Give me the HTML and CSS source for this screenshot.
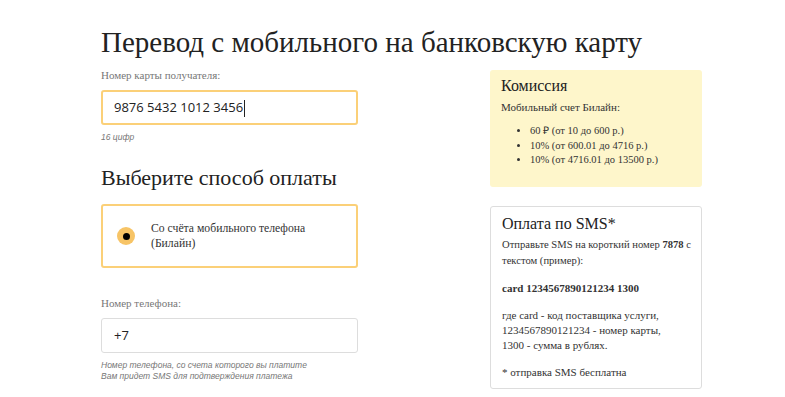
FILE: index.html
```html
<!DOCTYPE html>
<html>
    <head>
        <title>Перевод с мобильного на банковскую карту</title>
        <meta http-equiv="content-type" content="text/html; charset=UTF-8">
        <link rel="stylesheet" href="styles.css">
    </head>
    <body>
        <h1>Перевод с мобильного на банковскую карту</h1>

        <div class="columns">
            <div class="form">
                <label class="label">Номер карты получателя:</label>
                <div class="input active">9876 5432 1012 3456<span class="caret"></span></div>
                <p class="hint">16 цифр</p>

                <h2>Выберите способ оплаты</h2>
                <div class="method">
                    <span class="radio"></span>
                    <span class="method-text">Со счёта мобильного телефона<br>(Билайн)</span>
                </div>

                <label class="label phone-label">Номер телефона:</label>
                <div class="input">+7</div>
                <p class="hint">Номер телефона, со счета которого вы платите<br>Вам придет SMS для подтверждения платежа</p>
            </div>

            <div class="side">
                <div class="box fee">
                    <h3>Комиссия</h3>
                    <p>Мобильный счет Билайн:</p>
                    <ul>
                        <li>60 ₽ (от 10 до 600 р.)</li>
                        <li>10% (от 600.01 до 4716 р.)</li>
                        <li>10% (от 4716.01 до 13500 р.)</li>
                    </ul>
                </div>

                <div class="box sms">
                    <h3>Оплата по SMS*</h3>
                    <p class="intro">Отправьте SMS на короткий номер <b>7878</b> с<br>текстом (пример):</p>
                    <p><b>card 1234567890121234 1300</b></p>
                    <p>где card - код поставщика услуги,<br>1234567890121234 - номер карты,<br>1300 - сумма в рублях.</p>
                    <p>* отправка SMS бесплатна</p>
                </div>
            </div>
        </div>
    </body>
</html>
```

FILE: styles.css
```css
body { margin: 0; padding: 0 0 0 101px; font-family: 'Liberation Serif', serif; color: #333; background: #fff; }

h1 { margin: 0; padding-top: 22px; font-size: 29px; font-weight: normal; line-height: 40px; color: #222; }
h2 { margin: 21px 0 0 0; font-size: 22px; font-weight: normal; line-height: 28px; color: #222; }
h3 { margin: 0 0 4px 0; font-size: 16px; font-weight: normal; line-height: 20px; color: #222; }

.columns { display: flex; gap: 132px; margin-top: 6px; }
.form { width: 257px; }
.side { width: 212px; display: flex; flex-direction: column; gap: 19px; padding-top: 2px; }

.label { display: block; font-size: 11px; color: #777; line-height: 14px; margin-bottom: 8px; }
.phone-label { margin-top: 28px; }

.input { box-sizing: border-box; height: 35px; padding: 0 12px; border: 1px solid #ddd; border-radius: 3px; font-family: 'Open Sans', sans-serif; font-size: 13px; line-height: 33px; color: #222; }
.input.active { border: 2px solid #fbd078; line-height: 31px; padding: 0 11px; }
.caret { display: inline-block; width: 1px; height: 17px; background: #222; vertical-align: middle; margin-left: 1px; }

.hint { margin: 7px 0 0 0; font-family: 'Liberation Sans', sans-serif; font-style: italic; font-size: 8.5px; line-height: 11px; color: #777; }

.method { box-sizing: border-box; display: flex; align-items: center; height: 64px; margin-top: 12px; padding: 0 0 0 14px; border: 2px solid #fbd078; border-radius: 3px; }
.radio { width: 18px; height: 18px; border-radius: 50%; background: #f7c466; display: flex; align-items: center; justify-content: center; }
.radio:after { content: ""; width: 7px; height: 7px; border-radius: 50%; background: #000; }
.method-text { margin-left: 16px; font-size: 11.7px; line-height: 15px; color: #333; }

.box { box-sizing: border-box; border-radius: 3px; padding: 6px 8px 12px 11px; font-size: 11px; line-height: 15px; color: #333; }
.box p { margin: 0 0 12px 0; }
.box p:last-child { margin-bottom: 0; }
.fee { background: #fef6cb; height: 117px; }
.fee p { margin-bottom: 9px; }
.fee ul { margin: 0; padding-left: 29px; font-size: 10.5px; line-height: 14.5px; }
.sms { border: 1px solid #ddd; height: 183px; padding-top: 8px; }
.sms h3 { line-height: 18px; margin-bottom: 4px; }
.sms .intro { font-size: 10.6px; line-height: 16px; }
```
